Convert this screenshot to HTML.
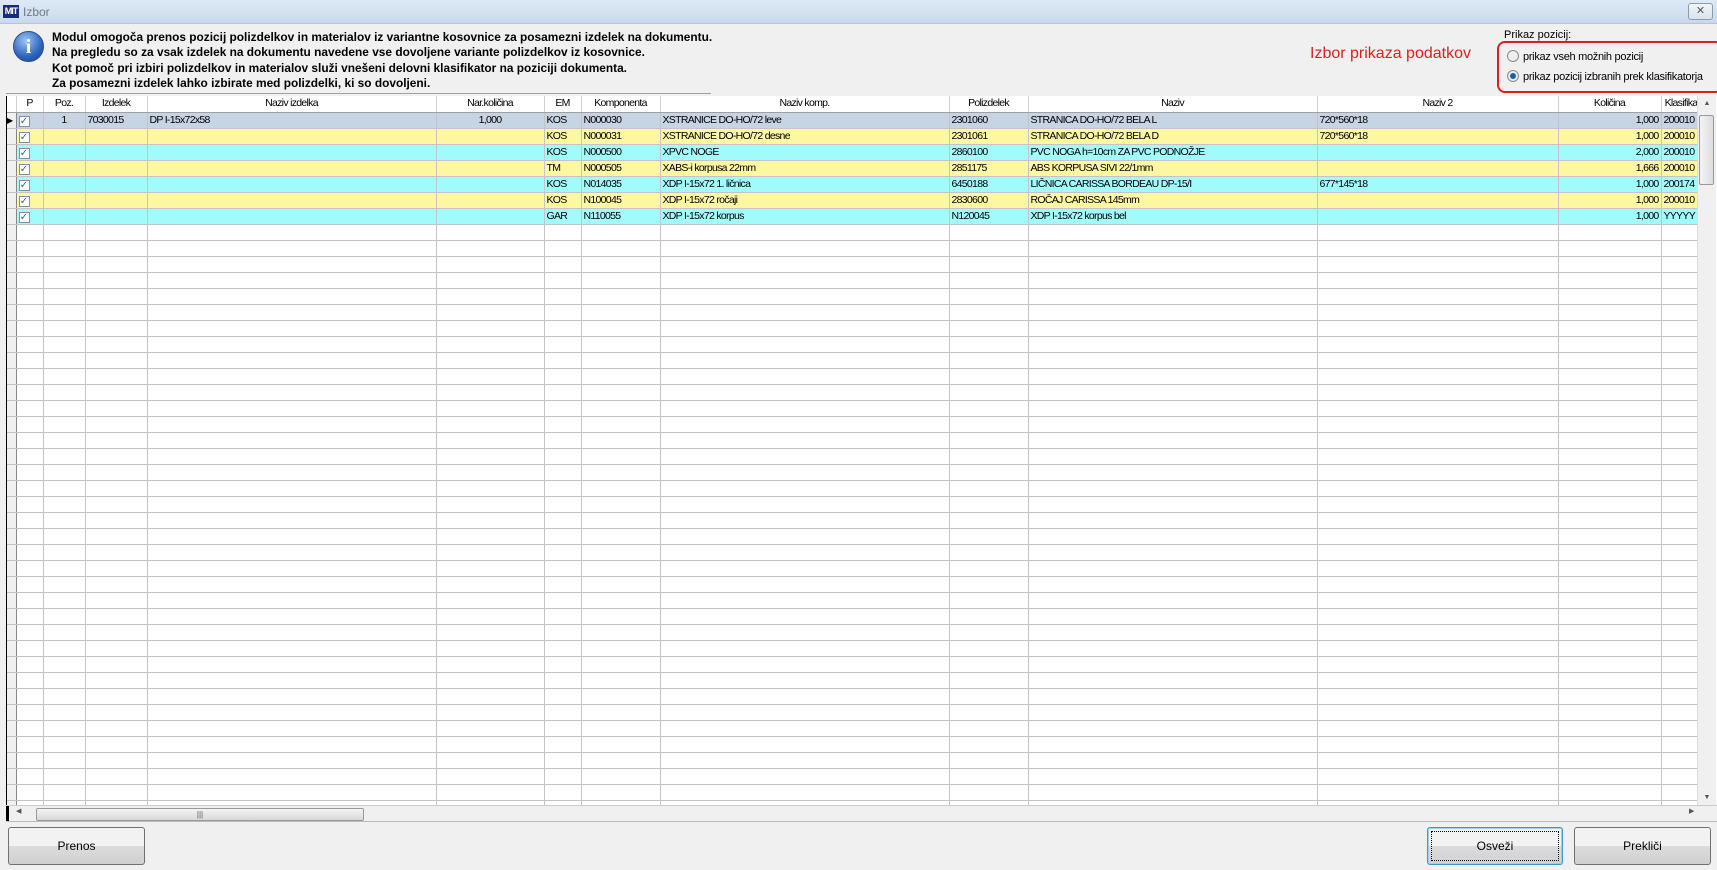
<!DOCTYPE html>
<html><head><meta charset="utf-8">
<style>
*{box-sizing:border-box;margin:0;padding:0}
body{width:1717px;height:870px;background:#f0f0f0;font-family:"Liberation Sans",sans-serif;position:relative;overflow:hidden}
.title{position:absolute;left:0;top:0;width:1717px;height:24px;background:linear-gradient(#dfe9f5,#c9d9ec);border-bottom:1px solid #b5c4d6}
.logo{position:absolute;left:3px;top:5px;width:16px;height:13px;background:#1a2a7a;color:#fff;font:bold 9px "Liberation Sans";line-height:13px;text-align:center;letter-spacing:-1px}
.ttl{position:absolute;left:23px;top:5px;font-size:12px;color:#6a7a8a}
.close{position:absolute;left:1688px;top:3px;width:25px;height:17px;border:1px solid #8a9bb0;border-radius:3px;background:linear-gradient(#f2f5f9,#d8e2ee);font-size:11px;text-align:center;line-height:15px;color:#556}
.icon{position:absolute;left:13px;top:31px;width:31px;height:31px;border-radius:50%;background:radial-gradient(circle at 40% 30%,#9cc4f2,#2c64c0 60%,#1a3f8a);border:1px solid #2a4f90;color:#fff;font:bold 20px "Liberation Serif";text-align:center;line-height:30px}
.info{position:absolute;left:52px;top:30px;font-size:12px;font-weight:bold;line-height:15.3px;color:#000;transform:scaleX(0.99);transform-origin:left top;white-space:nowrap}
.hr{position:absolute;left:6px;top:93px;width:705px;height:1px;background:#a0a0a0}
.red{position:absolute;left:1310px;top:45px;font-size:16px;color:#e02020}
.pk{position:absolute;left:1504px;top:29px;font-size:11px;color:#000}
.box{position:absolute;left:1497px;top:41px;width:226px;height:52px;border:2px solid #d82020;border-radius:8px}
.rad{position:absolute;left:1507px;font-size:11px;color:#000;white-space:nowrap;letter-spacing:-0.3px}
.rad i{display:inline-block;width:12px;height:12px;border-radius:50%;border:1px solid #8a8a8a;background:#eee;vertical-align:-2px;margin-right:4px;position:relative}
.rad i.on:after{content:"";position:absolute;left:2px;top:2px;width:6px;height:6px;border-radius:50%;background:#1e5fa8}
.grid{position:absolute;left:6px;top:96px;width:1711px;height:710px;background:#fff;overflow:hidden;border-left:1px solid #000}
table{border-collapse:collapse;table-layout:fixed;font-size:10.5px;letter-spacing:-0.7px}
td{height:16px;border-right:1px solid #c4c4c4;border-bottom:1px solid #c4c4c4;white-space:nowrap;overflow:hidden;padding:0 2px;line-height:15px}
tr.h td{background:#fff;text-align:center;border-right:1px solid #d0d0d0;border-bottom:1px solid #a0a0a0}
td.ind{background:#f0f0f0;border-right:1px solid #888}
tr.s td{background:#c6d4e4}
tr.y td{background:#fdf6a2}
tr.c td{background:#a2fbfb}
tr.s td.ind,tr.y td.ind,tr.c td.ind{background:#f0f0f0}
.r{text-align:right}
.cb{display:inline-block;width:11px;height:11px;border:1px solid #8090a0;background:#fff;font-size:10px;line-height:9px;text-align:center;color:#3060b0;vertical-align:-1px;letter-spacing:0}
.vs{position:absolute;left:1697px;top:96px;width:19px;height:710px;background:#f0f0f0;border-left:1px solid #ddd}
.thumb{position:absolute;left:1699px;top:115px;width:15px;height:70px;border:1px solid #999;border-radius:2px;background:linear-gradient(90deg,#f4f4f4,#dcdcdc)}
.hs{position:absolute;left:6px;top:805px;width:1711px;height:17px;background:#f0f0f0;border-top:1px solid #ccc;border-bottom:1px solid #bbb}
.hthumb{position:absolute;left:30px;top:2px;width:328px;height:13px;border:1px solid #999;border-radius:2px;background:linear-gradient(#f4f4f4,#d8d8d8);text-align:center;font-size:8px;line-height:11px;color:#555}
.btn{position:absolute;top:827px;height:38px;border:1px solid #707070;border-radius:3px;background:linear-gradient(#f2f2f2 50%,#dcdcdc 50%,#d0d0d0);font-size:12px;text-align:center;line-height:36px;color:#000}
</style></head><body>
<div class="title"><div class="logo">MIT</div><div class="ttl">Izbor</div><div class="close">✕</div></div>
<div class="icon">i</div>
<div class="info">Modul omogoča prenos pozicij polizdelkov in materialov iz variantne kosovnice za posamezni izdelek na dokumentu.<br>Na pregledu so za vsak izdelek na dokumentu navedene vse dovoljene variante polizdelkov iz kosovnice.<br>Kot pomoč pri izbiri polizdelkov in materialov služi vnešeni delovni klasifikator na poziciji dokumenta.<br>Za posamezni izdelek lahko izbirate med polizdelki, ki so dovoljeni.</div>
<div class="hr"></div>
<div class="red">Izbor prikaza podatkov</div>
<div class="pk">Prikaz pozicij:</div>
<div class="box"></div>
<div class="rad" style="top:50px"><i></i>prikaz vseh možnih pozicij</div>
<div class="rad" style="top:70px"><i class="on"></i>prikaz pozicij izbranih prek klasifikatorja</div>

<div class="grid">
<table id="t">
<colgroup><col style="width:9px"><col style="width:27px"><col style="width:42px"><col style="width:62px"><col style="width:289px"><col style="width:108px"><col style="width:37px"><col style="width:79px"><col style="width:289px"><col style="width:79px"><col style="width:289px"><col style="width:241px"><col style="width:103px"><col style="width:40px"></colgroup>
<tr class="h"><td class="ind"></td><td>P</td><td>Poz.</td><td>Izdelek</td><td>Naziv izdelka</td><td>Nar.količina</td><td>EM</td><td>Komponenta</td><td>Naziv komp.</td><td>Polizdelek</td><td>Naziv</td><td>Naziv 2</td><td class="r">Količina</td><td>Klasifika</td></tr>
<tr class="s"><td class="ind" style="font-size:8px;padding:0">▶</td><td><span class="cb">✓</span></td><td style="text-align:center">1</td><td>7030015</td><td>DP I-15x72x58</td><td style="text-align:center">1,000</td><td>KOS</td><td>N000030</td><td>XSTRANICE DO-HO/72 leve</td><td>2301060</td><td>STRANICA DO-HO/72 BELA L</td><td>720*560*18</td><td class="r">1,000</td><td>200010</td></tr>
<tr class="y"><td class="ind"></td><td><span class="cb">✓</span></td><td></td><td></td><td></td><td></td><td>KOS</td><td>N000031</td><td>XSTRANICE DO-HO/72 desne</td><td>2301061</td><td>STRANICA DO-HO/72 BELA D</td><td>720*560*18</td><td class="r">1,000</td><td>200010</td></tr>
<tr class="c"><td class="ind"></td><td><span class="cb">✓</span></td><td></td><td></td><td></td><td></td><td>KOS</td><td>N000500</td><td>XPVC NOGE</td><td>2860100</td><td>PVC NOGA h=10cm ZA PVC PODNOŽJE</td><td></td><td class="r">2,000</td><td>200010</td></tr>
<tr class="y"><td class="ind"></td><td><span class="cb">✓</span></td><td></td><td></td><td></td><td></td><td>TM</td><td>N000505</td><td>XABS-i korpusa 22mm</td><td>2851175</td><td>ABS KORPUSA SIVI 22/1mm</td><td></td><td class="r">1,666</td><td>200010</td></tr>
<tr class="c"><td class="ind"></td><td><span class="cb">✓</span></td><td></td><td></td><td></td><td></td><td>KOS</td><td>N014035</td><td>XDP I-15x72 1. ličnica</td><td>6450188</td><td>LIČNICA CARISSA BORDEAU DP-15/I</td><td>677*145*18</td><td class="r">1,000</td><td>200174</td></tr>
<tr class="y"><td class="ind"></td><td><span class="cb">✓</span></td><td></td><td></td><td></td><td></td><td>KOS</td><td>N100045</td><td>XDP I-15x72 ročaji</td><td>2830600</td><td>ROČAJ CARISSA 145mm</td><td></td><td class="r">1,000</td><td>200010</td></tr>
<tr class="c"><td class="ind"></td><td><span class="cb">✓</span></td><td></td><td></td><td></td><td></td><td>GAR</td><td>N110055</td><td>XDP I-15x72 korpus</td><td>N120045</td><td>XDP I-15x72 korpus bel</td><td></td><td class="r">1,000</td><td>YYYYY</td></tr>
</table>
</div>
<script>
var t=document.getElementById('t');
for(var i=0;i<38;i++){var r=t.insertRow();for(var j=0;j<14;j++){var c=r.insertCell();if(j==0)c.className='ind';}}
</script>
<div class="vs"><div style="position:absolute;top:0;left:0;width:18px;height:16px;font-size:7px;text-align:center;line-height:16px;color:#555">▲</div><div style="position:absolute;bottom:0;left:0;width:18px;height:16px;font-size:7px;text-align:center;line-height:16px;color:#555">▼</div></div>
<div class="thumb"></div>
<div class="hs"><div style="position:absolute;left:0;top:0;width:3px;height:15px;background:#000"></div><div style="position:absolute;left:10px;top:1px;font-size:7px;color:#555">◀</div><div class="hthumb">|||</div><div style="position:absolute;left:1683px;top:1px;font-size:7px;color:#555">▶</div></div>
<div class="btn" style="left:8px;width:137px">Prenos</div>
<div class="btn" style="left:1427px;width:136px;border-color:#3c98c8;box-shadow:inset 0 0 0 1px #9cd4f0"><span style="position:absolute;left:3px;top:3px;right:3px;bottom:3px;border:1px dotted #000"></span>Osveži</div>
<div class="btn" style="left:1574px;width:137px">Prekliči</div>
</body></html>
